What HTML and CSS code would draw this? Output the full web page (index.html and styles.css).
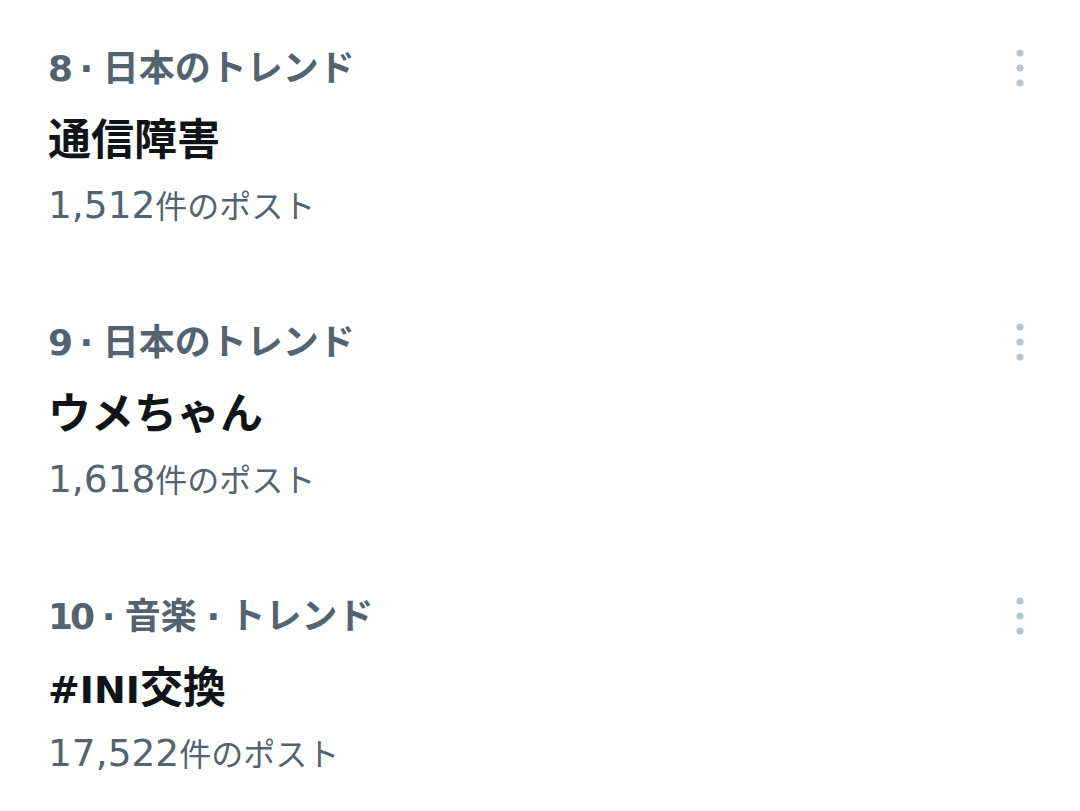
FILE: index.html
```html
<!DOCTYPE html>
<html lang="ja">
<head>
  <meta charset="UTF-8">
  <meta name="viewport" content="width=device-width, initial-scale=1.0">
  <title>トレンド</title>
  <link rel="stylesheet" href="styles.css">
</head>
<body>
  <div class="trend-list">
    <div class="trend">
      <div class="trend-head">
        <span class="trend-meta"><span class="rank">8</span> · 日本のトレンド</span>
        <svg class="more" viewBox="0 0 40 48" aria-hidden="true">
          <circle cx="20" cy="10" r="3.6"/>
          <circle cx="20" cy="25" r="3.6"/>
          <circle cx="20" cy="40" r="3.6"/>
        </svg>
      </div>
      <div class="trend-title">通信障害</div>
      <div class="trend-count"><span class="latin">1,512</span>件のポスト</div>
    </div>
    <div class="trend">
      <div class="trend-head">
        <span class="trend-meta"><span class="rank">9</span> · 日本のトレンド</span>
        <svg class="more" viewBox="0 0 40 48" aria-hidden="true">
          <circle cx="20" cy="10" r="3.6"/>
          <circle cx="20" cy="25" r="3.6"/>
          <circle cx="20" cy="40" r="3.6"/>
        </svg>
      </div>
      <div class="trend-title">ウメちゃん</div>
      <div class="trend-count"><span class="latin">1,618</span>件のポスト</div>
    </div>
    <div class="trend">
      <div class="trend-head">
        <span class="trend-meta"><span class="rank">10</span> · 音楽 · トレンド</span>
        <svg class="more" viewBox="0 0 40 48" aria-hidden="true">
          <circle cx="20" cy="10" r="3.6"/>
          <circle cx="20" cy="25" r="3.6"/>
          <circle cx="20" cy="40" r="3.6"/>
        </svg>
      </div>
      <div class="trend-title"><span class="latin">#INI</span>交換</div>
      <div class="trend-count"><span class="latin">17,522</span>件のポスト</div>
    </div>
  </div>
</body>
</html>
```

FILE: styles.css
```css
body {
  margin: 0;
  background: #ffffff;
  font-family: "DejaVu Sans", "Noto Sans CJK JP", sans-serif;
}
.trend {
  padding: 45px 40px 43px 48px;
}
.trend-head {
  display: flex;
  justify-content: space-between;
  align-items: flex-start;
  height: 48px;
}
.trend-meta {
  font-size: 36px;
  line-height: 48px;
  font-weight: 700;
  word-spacing: -3px;
  color: #536471;
}
.rank {
  letter-spacing: -3px;
}
.more {
  width: 40px;
  height: 48px;
  margin-top: -2px;
  fill: #b7c5ce;
}
.trend-title {
  margin-top: 19px;
  font-size: 43px;
  line-height: 56px;
  font-weight: 700;
  color: #0f1419;
}
.trend-count {
  margin-top: 15px;
  font-size: 32px;
  line-height: 48px;
  color: #536471;
}
.latin {
  font-size: 37.5px;
  line-height: 1;
}
.trend-title .latin {
  font-size: 38px;
}
```
